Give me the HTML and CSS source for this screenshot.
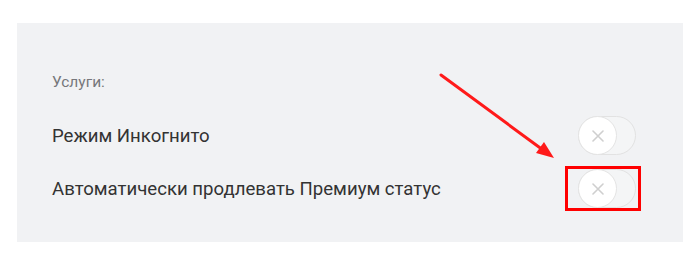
FILE: index.html
```html
<!DOCTYPE html>
<html lang="ru">
<head>
  <meta charset="UTF-8">
  <title>Услуги</title>
  <link rel="stylesheet" href="styles.css">
</head>
<body>
  <div class="page">
    <div class="panel">
      <div class="panel-title">Услуги:</div>
      <div class="row">
        <span class="row-label">Режим Инкогнито</span>
        <div class="toggle">
          <span class="knob">
            <svg width="12" height="12" viewBox="0 0 12 12"><path d="M1 1L11 11M11 1L1 11" stroke="#cfcfcf" stroke-width="1.6" stroke-linecap="round"/></svg>
          </span>
        </div>
      </div>
      <div class="row">
        <span class="row-label">Автоматически продлевать Премиум статус</span>
        <div class="toggle marked">
          <span class="knob">
            <svg width="12" height="12" viewBox="0 0 12 12"><path d="M1 1L11 11M11 1L1 11" stroke="#cfcfcf" stroke-width="1.6" stroke-linecap="round"/></svg>
          </span>
        </div>
      </div>
    </div>

    <!-- annotation arrow -->
    <svg class="arrow" width="700" height="264" viewBox="0 0 700 264">
      <line x1="441" y1="75" x2="543" y2="150" stroke="#ff1a1a" stroke-width="3" stroke-linecap="round"/>
      <polygon points="554,158 536,153 544,142" fill="#ff1a1a"/>
    </svg>
  </div>
</body>
</html>
```

FILE: styles.css
```css
body {
  margin: 0;
  background-color: #fff;
  font-family: Roboto, "Liberation Sans", sans-serif;
}

.page {
  position: relative;
  width: 700px;
  height: 264px;
  padding: 23px 17px 0;
  box-sizing: border-box;
}

.panel {
  background-color: #f1f2f4;
  height: 219px;
  padding: 49px 47px 0 35px;
  box-sizing: border-box;
}

.panel-title {
  font-size: 15.5px;
  color: #76777b;
  line-height: 20px;
  margin-bottom: 24px;
}

.row {
  display: flex;
  align-items: center;
  justify-content: space-between;
  margin-bottom: 14px;
}

.row-label {
  font-size: 18.6px;
  color: #333;
}

.toggle {
  position: relative;
  width: 58px;
  height: 39px;
  border: 1px solid #e2e2e2;
  border-radius: 20px;
  box-sizing: border-box;
  background-color: #f4f5f6;
}

.knob {
  position: absolute;
  left: -1px;
  top: -1px;
  width: 39px;
  height: 39px;
  border: 1px solid #e4e4e4;
  border-radius: 50%;
  background-color: #fff;
  box-sizing: border-box;
  display: flex;
  align-items: center;
  justify-content: center;
}

.marked::after {
  content: "";
  position: absolute;
  left: -14px;
  right: -6px;
  top: -4px;
  bottom: -4px;
  border: 3px solid #ff0000;
}

.arrow {
  position: absolute;
  left: 0;
  top: 0;
}
```
